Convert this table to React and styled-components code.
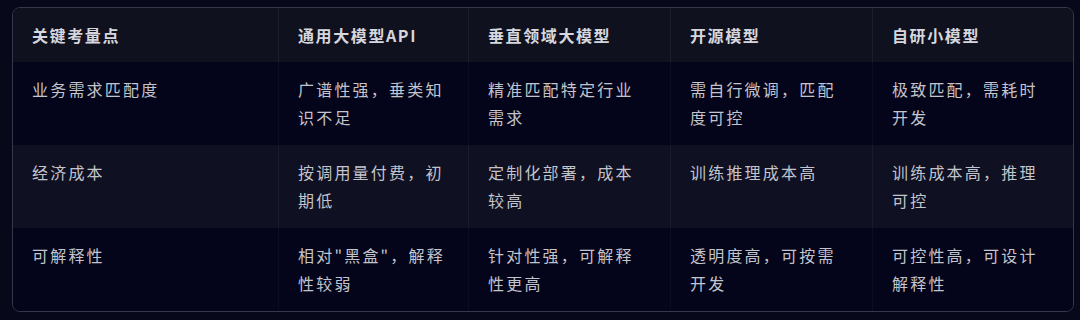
import React from 'react'
import styled, { createGlobalStyle } from 'styled-components'

const GlobalStyle = createGlobalStyle`
  html, body {
    margin: 0;
    padding: 0;
    background: #07081a;
  }
  body {
    font-family: "Noto Sans CJK SC", "Noto Sans", sans-serif;
  }
`

const Page = styled.div`
  width: 1080px;
  height: 320px;
  padding: 7px 0 0 12px;
  box-sizing: border-box;
  background: #07081a;
`

const Table = styled.table`
  width: 1061px;
  table-layout: fixed;
  border-collapse: separate;
  border-spacing: 0;
  border: 1px solid #35374a;
  border-radius: 8px;
  overflow: hidden;
`

const HeadCell = styled.th`
  text-align: left;
  font-size: 16px;
  font-weight: 700;
  line-height: 28px;
  letter-spacing: 1.6px;
  color: #d6d7de;
  background: #10111f;
  padding: 13px 18px 13px 19px;
  border-left: 1px solid #1c1d2d;
  &:first-child {
    border-left: none;
  }
`

const Row = styled.tr`
  background: ${(p) => (p.$alt ? '#0f1022' : '#04051a')};
`

const Cell = styled.td`
  vertical-align: top;
  font-size: 16px;
  line-height: 28px;
  letter-spacing: 2.2px;
  color: #c3c4cc;
  padding: 13px ${(p) => p.$pr}px 14px 19px;
  border-left: 1px solid ${(p) => (p.$alt ? '#1a1b2c' : '#0b0c20')};
  word-break: break-all;
  &:first-child {
    border-left: none;
  }
`

const columns = [
  { width: 265, pr: 24 },
  { width: 190, pr: 12 },
  { width: 202, pr: 24 },
  { width: 202, pr: 24 },
  { width: 201, pr: 24 },
]

const headers = ['关键考量点', '通用大模型API', '垂直领域大模型', '开源模型', '自研小模型']

const rows = [
  ['业务需求匹配度', '广谱性强，垂类知识不足', '精准匹配特定行业需求', '需自行微调，匹配度可控', '极致匹配，需耗时开发'],
  ['经济成本', '按调用量付费，初期低', '定制化部署，成本较高', '训练推理成本高', '训练成本高，推理可控'],
  ['可解释性', '相对"黑盒"，解释性较弱', '针对性强，可解释性更高', '透明度高，可按需开发', '可控性高，可设计解释性'],
]

const App = () => {
  return (
    <Page>
      <GlobalStyle />
      <Table>
        <colgroup>
          {columns.map((c, i) => (
            <col key={i} style={{ width: c.width }} />
          ))}
        </colgroup>
        <thead>
          <tr>
            {headers.map((h) => (
              <HeadCell key={h}>{h}</HeadCell>
            ))}
          </tr>
        </thead>
        <tbody>
          {rows.map((r, i) => (
            <Row key={i} $alt={i % 2 === 1}>
              {r.map((c, j) => (
                <Cell key={j} $alt={i % 2 === 1} $pr={columns[j].pr}>{c}</Cell>
              ))}
            </Row>
          ))}
        </tbody>
      </Table>
    </Page>
  )
}

export default App
